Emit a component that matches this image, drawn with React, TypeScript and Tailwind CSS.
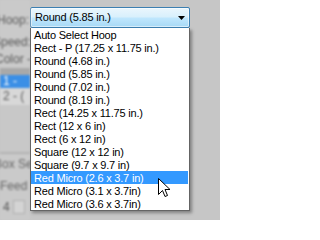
import React from "react";

const items = [
  "Auto Select Hoop",
  "Rect - P (17.25 x 11.75 in.)",
  "Round (4.68 in.)",
  "Round (5.85 in.)",
  "Round (7.02 in.)",
  "Round (8.19 in.)",
  "Rect (14.25 x 11.75 in.)",
  "Rect (12 x 6 in)",
  "Rect (6 x 12 in)",
  "Square (12 x 12 in)",
  "Square (9.7 x 9.7 in)",
  "Red Micro (2.6 x 3.7 in)",
  "Red Micro (3.1 x 3.7in)",
  "Red Micro (3.6 x 3.7in)",
];

export default function App() {
  return (
    <div
      className="relative w-[220px] h-[220px] overflow-hidden bg-[#c6c6c6] flex"
      style={{ fontFamily: '"Liberation Sans", Arial, sans-serif' }}
    >
      {/* blurred background window */}
      <div className="w-[30px] shrink-0 flex flex-col blur-[0.8px] text-[12px] text-[#5a5a5a] bg-[#cacaca]">
        <div className="h-[13px]" />
        <div className="h-[14px] leading-[14px] whitespace-nowrap -ml-[3px]">Hoop:</div>
        <div className="h-[8px]" />
        <div className="h-[14px] leading-[14px] whitespace-nowrap -ml-[7px]">Speed:</div>
        <div className="h-[3px]" />
        <div className="h-[14px] leading-[14px] whitespace-nowrap -ml-[5px]">Color - N</div>
        <div className="h-[2px]" />
        <div className="h-[7px] bg-[#a9a9a9]" />
        <div className="h-[13px] leading-[13px] bg-[#3b8fe6] text-white pl-[3px] whitespace-nowrap">1 -</div>
        <div className="h-[17px] leading-[17px] bg-[#d8d8d8] pl-[3px] whitespace-nowrap">2 - (</div>
        <div className="h-[47px] bg-[#c8c8c8]" />
        <div className="h-[2px] bg-[#b3b3b3]" />
        <div className="h-[3px]" />
        <div className="h-[14px] leading-[14px] whitespace-nowrap -ml-[6px] text-[#666]">Box Seq</div>
        <div className="h-[8px]" />
        <div className="h-[14px] leading-[14px] whitespace-nowrap -ml-[4px] text-[#666]">-Feed</div>
        <div className="h-[7px]" />
        <div className="h-[14px] flex items-center gap-[3px]">
          <span className="pl-[3px] text-[#555] leading-[14px]">4</span>
          <div className="w-[12px] h-[14px] border border-[#b0b0b0] bg-[#d4d4d4]" />
        </div>
      </div>

      <div className="flex-1 flex flex-col">
        <div className="h-[7px]" />
        {/* combo box */}
        <div className="w-[160px] h-[21px] border border-[#3c7fb1] rounded-[2px] bg-[linear-gradient(to_bottom,#eaf6fd_0%,#d9f0fc_45%,#bee6fd_55%,#a7d9f5_100%)] shadow-[inset_0_0_0_1px_rgba(255,255,255,0.55)] flex items-center justify-between pl-[4px] pr-[4px]">
          <span className="text-[11px] tracking-[-0.2px] text-black leading-[13px] whitespace-nowrap">
            Round (5.85 in.)
          </span>
          <svg width="7" height="4" viewBox="0 0 7 4" className="mt-[1px]">
            <polygon points="0,0 7,0 3.5,4" fill="#000" />
          </svg>
        </div>
      </div>

      {/* dropdown list */}
      <div className="absolute left-[30px] top-[28px] w-[160px] bg-white border-x border-b border-[#646464] shadow-[2px_2px_3px_rgba(0,0,0,0.35)] flex flex-col">
        {items.map((it, i) => (
          <div
            key={i}
            className={
              i === 11
                ? "h-[13px] leading-[15px] pl-[3px] mr-[1px] text-[11px] tracking-[-0.2px] whitespace-nowrap bg-[#3399ff] text-white"
                : "h-[13px] leading-[15px] pl-[3px] mr-[1px] text-[11px] tracking-[-0.2px] whitespace-nowrap text-black"
            }
          >
            {it}
          </div>
        ))}
      </div>

      {/* mouse cursor */}
      <svg
        width="14"
        height="21"
        viewBox="0 0 14 21"
        className="absolute left-[158px] top-[178px]"
      >
        <path
          d="M0.5 0.5 V16.5 L4.5 12.5 L7 18.5 L9.5 17.5 L7 11.5 H12 Z"
          fill="#fff"
          stroke="#000"
          strokeWidth="1"
          strokeLinejoin="miter"
        />
      </svg>
    </div>
  );
}
